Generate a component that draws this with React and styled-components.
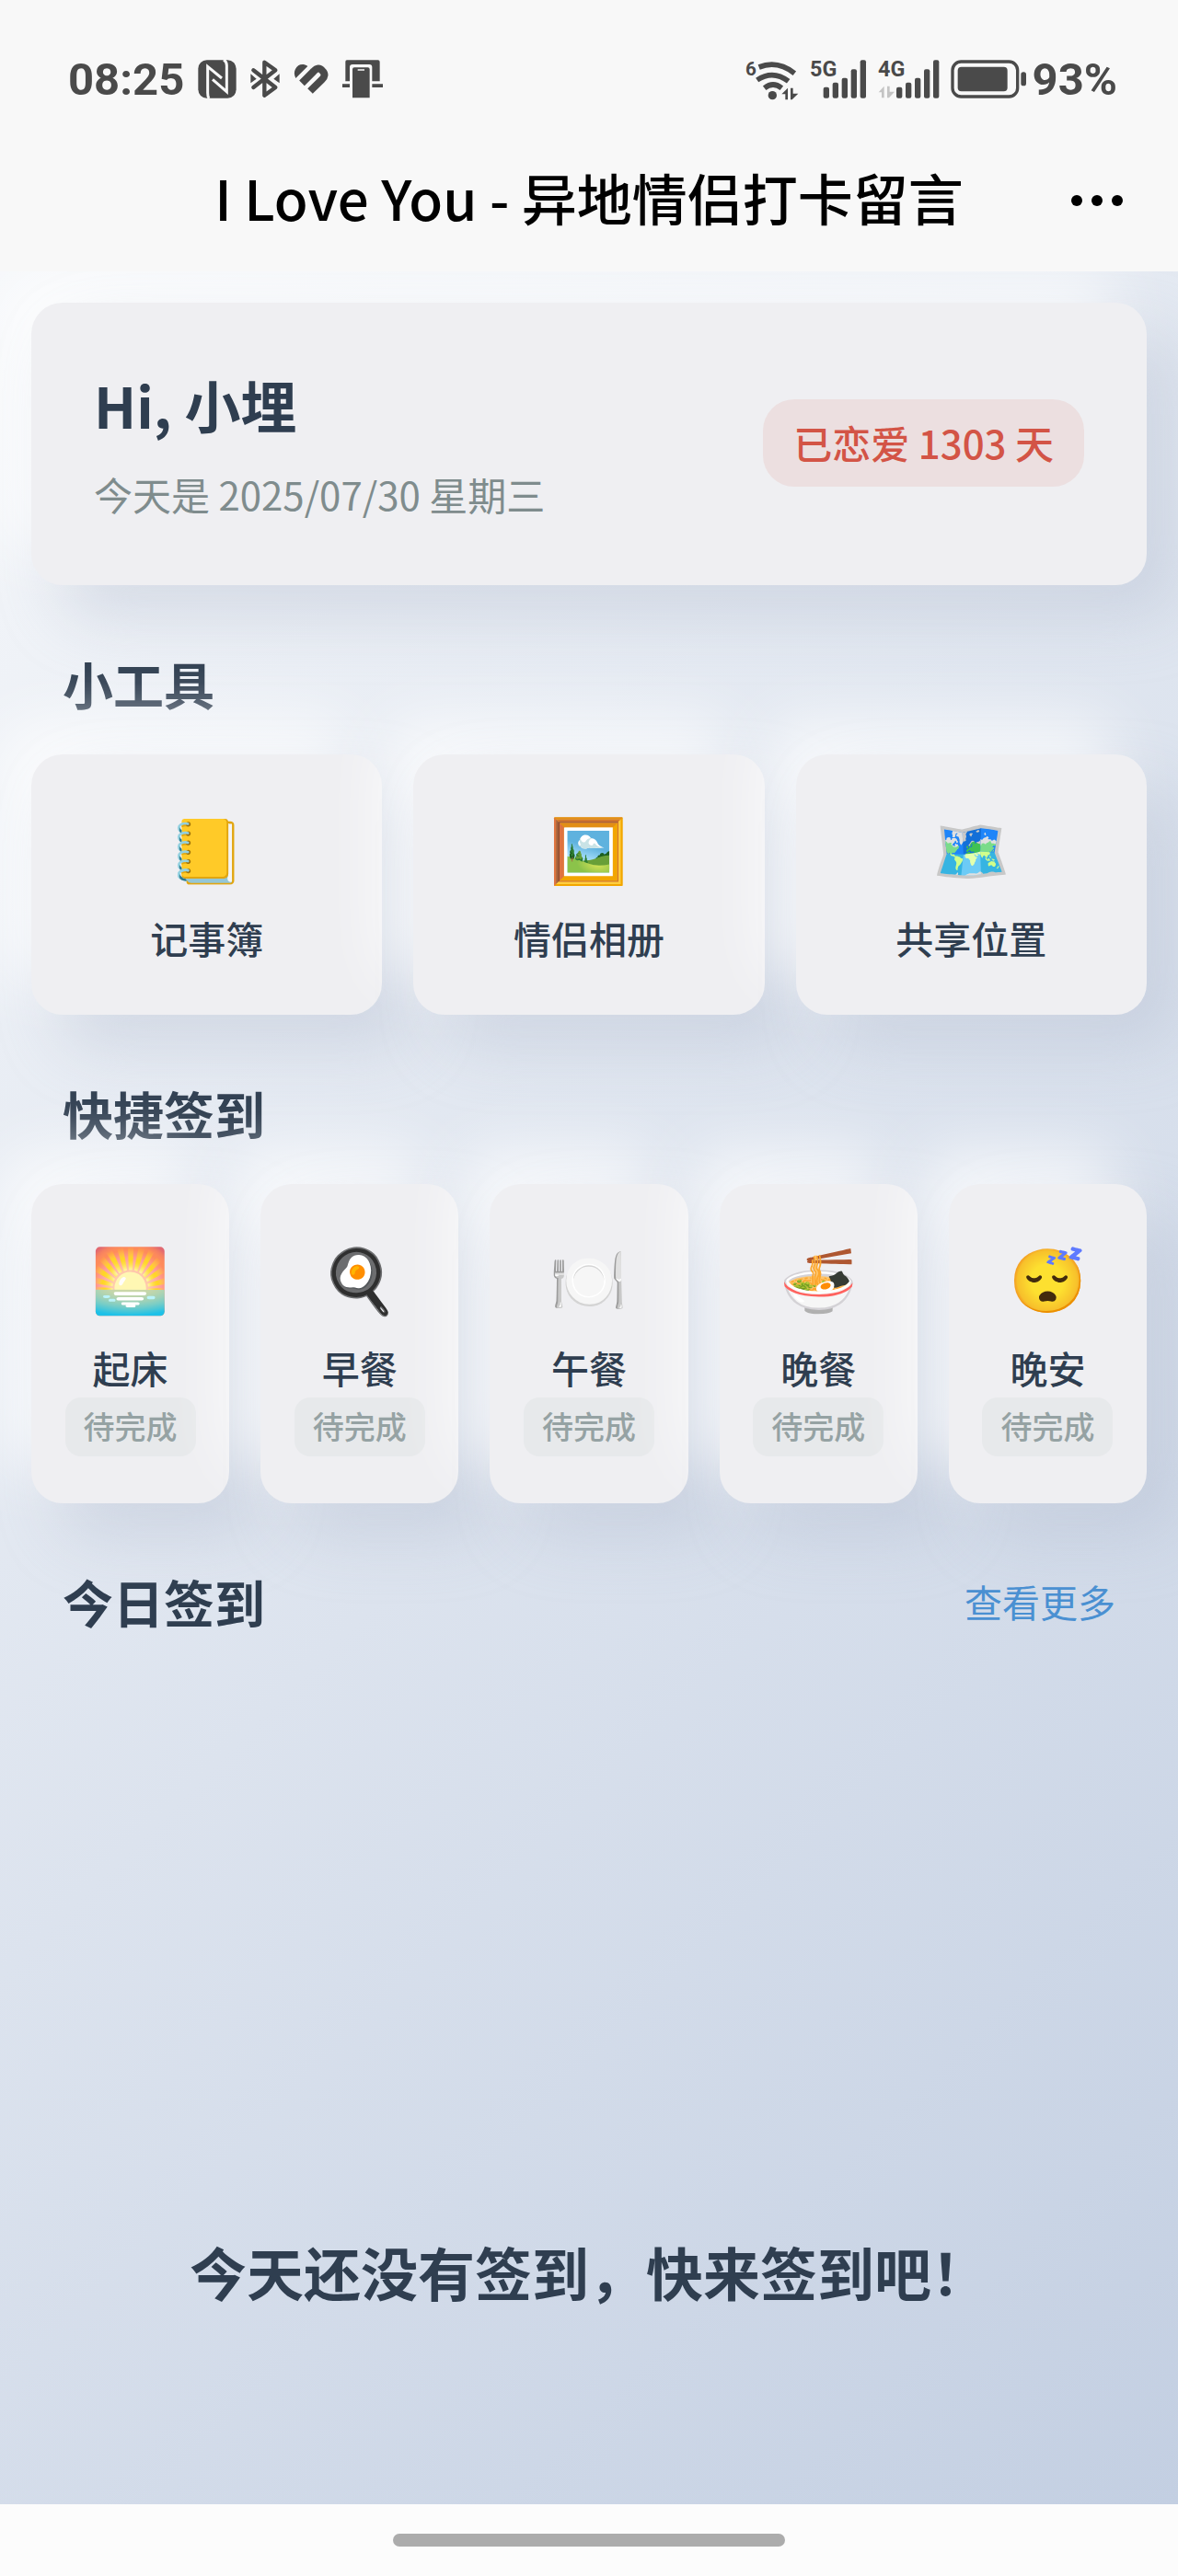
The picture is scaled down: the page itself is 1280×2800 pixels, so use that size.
import React from "react";
import styled, { createGlobalStyle } from "styled-components";

const GlobalStyle = createGlobalStyle`
  :root {
    --app-font-family: "Noto Sans CJK SC", "Noto Sans", sans-serif;
    --status-font-family: Roboto, "Noto Sans", sans-serif;
    --ink: #2f3e50;
    --muted: #7f8c8d;
    --status: #4a4a4a;
    --card: #efeff2;
  }

  * {
    box-sizing: border-box;
  }

  body {
    margin: 0px;
    font-family: var(--app-font-family);
    color: var(--ink);
  }

  button {
    border: none;
    font-family: inherit;
    color: inherit;
    cursor: pointer;
  }
`;

const Screen = styled.div`
  display: flex;
  flex-direction: column;
  min-height: 100vh;
`;

const Header = styled.header`
  padding-bottom: 31px;
  background: #f8f8f8;
`;

const StatusBar = styled.div`
  display: flex;
  align-items: center;
  justify-content: space-between;
  height: 172px;
  padding: 0px 66px 0px 74px;
  color: var(--status);
  font-family: var(--status-font-family);
  font-size: 49px;
  font-weight: 700;
`;

const StatusGroup = styled.div`
  display: flex;
  align-items: center;
  gap: ${(props) => props.$gap}px;

  svg {
    display: block;
    fill: currentColor;
    overflow: visible;
  }
`;

const NavBar = styled.div`
  display: grid;
  grid-template-columns: 1fr auto 1fr;
  align-items: center;
  height: 92px;
  padding: 0px 54px;
`;

const NavTitle = styled.h1`
  grid-column: 2;
  margin: 0px;
  padding-bottom: 8px;
  color: #000000;
  font-size: 60px;
  font-weight: 500;
  line-height: 84px;
`;

const MoreButton = styled.button`
  display: flex;
  justify-self: end;
  gap: 10px;
  padding: 20px 6px;
  background: none;
`;

const Dot = styled.span`
  width: 12px;
  height: 12px;
  border-radius: 50%;
  background: #000000;
`;

const Content = styled.main`
  display: flex;
  flex: 1;
  flex-direction: column;
  padding: 34px;
  overflow: hidden;
  background: linear-gradient(135deg, #f5f7fa 0%, #c3cfe2 100%);
`;

const cardShadow = `
  34px 34px 68px rgba(174, 185, 205, 0.4),
  -34px -34px 68px rgba(255, 255, 255, 0.8)
`;

const GreetingCard = styled.section`
  position: relative;
  display: flex;
  align-items: center;
  justify-content: space-between;
  padding: 66px 68px 68px;
  border-radius: 34px;
  background: var(--card);
  box-shadow: ${cardShadow};
`;

const Greeting = styled.div`
  display: flex;
  flex-direction: column;
  gap: 21px;
`;

const GreetingName = styled.h2`
  margin: 0px;
  font-size: 61px;
  font-weight: 700;
  line-height: 90px;
`;

const GreetingDate = styled.p`
  margin: 0px;
  color: var(--muted);
  font-size: 42px;
  line-height: 62px;
`;

const LoveBadge = styled.span`
  padding: 15px 33px 17px;
  border-radius: 34px;
  background: #ecdfe0;
  color: #d35446;
  font-size: 42px;
  font-weight: 500;
  line-height: 63px;
`;

const SectionHead = styled.div`
  display: flex;
  align-items: center;
  justify-content: space-between;
  margin: 66px 34px 38px;
`;

const SectionTitle = styled.h2`
  margin: 0px;
  font-size: 55px;
  font-weight: 700;
  line-height: 80px;
`;

const MoreLink = styled.a`
  color: #4a90d2;
  font-size: 41px;
  text-decoration: none;
`;

const CardRow = styled.div`
  display: grid;
  grid-template-columns: repeat(${(props) => props.$columns}, 1fr);
  gap: 34px;
`;

const ActionCard = styled.button`
  position: relative;
  display: flex;
  flex-direction: column;
  align-items: center;
  padding: 56px 0px 51px;
  border-radius: 34px;
  background: var(--card);
  box-shadow: ${cardShadow};
`;

const ActionIcon = styled.span`
  display: flex;
  align-items: center;
  justify-content: center;
  height: 88px;
  margin-bottom: 24px;
  font-size: 68px;
  line-height: 88px;
`;

const ActionLabel = styled.span`
  padding-bottom: 2px;
  font-size: 41px;
  font-weight: 500;
  line-height: 62px;
`;

const ActionState = styled.span`
  padding: 6px 20px 9px;
  border-radius: 17px;
  background: #e7e9eb;
  color: #95a2a3;
  font-size: 34px;
  font-weight: 500;
  line-height: 49px;
`;

const EmptyText = styled.p`
  margin: 0px;
  padding-top: 606px;
  font-size: 62px;
  font-weight: 700;
  line-height: 90px;
  text-align: center;
`;

const Footer = styled.footer`
  display: flex;
  align-items: center;
  justify-content: center;
  height: 78px;
  background: #fcfcfc;
`;

const HomeHandle = styled.span`
  width: 33.3%;
  height: 14px;
  border-radius: 7px;
  background: #acacac;
`;

const NfcIcon = () => (
  <svg width="42" height="42" viewBox="0 0 126 126">
    <rect x="1" y="1" width="124" height="124" rx="28" />
    <path
      d="M36 126Q32 120 32 108V22L78 60M84 0Q94 6 94 18V104L48 64"
      fill="none"
      stroke="#f8f8f8"
      strokeWidth="9"
    />
  </svg>
);

const BluetoothIcon = () => (
  <svg width="32" height="42" viewBox="0 0 96 126">
    <path
      d="M10 34L82 90L46 116V8L82 34L10 90"
      fill="none"
      stroke="currentColor"
      strokeWidth="13"
      strokeLinecap="round"
      strokeLinejoin="round"
    />
    <path d="M1 46L20 62L1 76ZM95 46L76 62L95 76Z" />
  </svg>
);

const HeartIcon = () => (
  <svg width="38" height="34" viewBox="0 0 114 102">
    <path d="M7 48C-8 22 18 -10 46 9Z" />
    <path
      d="M27 64L65 26Q81 8 94 24Q108 38 92 53L54 90"
      fill="none"
      stroke="currentColor"
      strokeWidth="24"
    />
  </svg>
);

const StandIcon = () => (
  <svg width="44" height="42" viewBox="0 0 132 126">
    <path d="M10 6Q10 1 15 1H116Q122 1 122 7V70H97V24Q97 15 88 15H33Q24 15 24 24V70H10Z" />
    <path d="M0 79H24V90H0ZM97 79H132V90H97Z" />
    <path
      d="M33 31Q33 25 39 25H83Q89 25 89 31V124H33ZM50 31V35H72V31Z"
      fillRule="evenodd"
    />
  </svg>
);

const WifiIcon = () => (
  <svg width="58" height="46" viewBox="0 0 174 138">
    <text x="0" y="56" fontSize="62" fontWeight="700">
      6
    </text>
    <g fill="none" stroke="currentColor" strokeWidth="17">
      <path d="M44 30Q104 6 160 50" />
      <path d="M38 72Q90 38 140 76" />
      <path d="M62 98Q90 76 118 98" />
    </g>
    <circle cx="88" cy="122" r="14" />
    <path d="M118 118L138 98V136H130V118ZM147 98H155V116H172L152 136H147Z" />
  </svg>
);

const SignalIcon = ({ label, idle }) => (
  <svg
    width={idle ? 67 : 62}
    height="42"
    viewBox={idle ? "0 0 201 126" : "0 0 186 126"}
  >
    <text x="0" y="54" fontSize="70" fontWeight="700">
      {label}
    </text>
    {idle && (
      <path
        d="M2 106L20 86V124H12V106ZM30 86H38V104H54L36 124H30Z"
        fill="#c4c4c4"
      />
    )}
    <g transform={idle ? "translate(60 0)" : "translate(44 0)"}>
      <rect x="0" y="89" width="19" height="36" rx="6" />
      <rect x="30" y="74" width="19" height="51" rx="6" />
      <rect x="60" y="59" width="19" height="66" rx="6" />
      <rect x="90" y="31" width="19" height="94" rx="6" />
      <rect x="120" y="1" width="19" height="124" rx="6" />
    </g>
  </svg>
);

const BatteryIcon = () => (
  <svg width="83" height="42" viewBox="0 0 249 126">
    <rect
      x="6"
      y="6"
      width="212"
      height="114"
      rx="28"
      fill="none"
      stroke="currentColor"
      strokeWidth="10"
    />
    <rect x="23" y="23" width="162" height="80" rx="12" />
    <rect x="229" y="40" width="17" height="45" rx="8" />
  </svg>
);

const tools = [
  { icon: "📒", label: "记事簿" },
  { icon: "🖼️", label: "情侣相册" },
  { icon: "🗺️", label: "共享位置" },
];

const checkIns = [
  { icon: "🌅", label: "起床" },
  { icon: "🍳", label: "早餐" },
  { icon: "🍽️", label: "午餐" },
  { icon: "🍜", label: "晚餐" },
  { icon: "😴", label: "晚安" },
];

const App = () => {
  return (
    <Screen>
      <GlobalStyle />
      <Header>
        <StatusBar>
          <StatusGroup $gap={15}>
            <span>08:25</span>
            <NfcIcon />
            <BluetoothIcon />
            <HeartIcon />
            <StandIcon />
          </StatusGroup>
          <StatusGroup $gap={12}>
            <WifiIcon />
            <SignalIcon label="5G" />
            <SignalIcon label="4G" idle />
            <StatusGroup $gap={6}>
              <BatteryIcon />
              <span>93%</span>
            </StatusGroup>
          </StatusGroup>
        </StatusBar>
        <NavBar>
          <NavTitle>I Love You - 异地情侣打卡留言</NavTitle>
          <MoreButton type="button" aria-label="更多">
            <Dot />
            <Dot />
            <Dot />
          </MoreButton>
        </NavBar>
      </Header>
      <Content>
        <GreetingCard>
          <Greeting>
            <GreetingName>Hi, 小埋</GreetingName>
            <GreetingDate>今天是 2025/07/30 星期三</GreetingDate>
          </Greeting>
          <LoveBadge>已恋爱 1303 天</LoveBadge>
        </GreetingCard>
        <SectionHead>
          <SectionTitle>小工具</SectionTitle>
        </SectionHead>
        <CardRow $columns={3}>
          {tools.map((tool) => (
            <ActionCard type="button" key={tool.label}>
              <ActionIcon>{tool.icon}</ActionIcon>
              <ActionLabel>{tool.label}</ActionLabel>
            </ActionCard>
          ))}
        </CardRow>
        <SectionHead>
          <SectionTitle>快捷签到</SectionTitle>
        </SectionHead>
        <CardRow $columns={5}>
          {checkIns.map((item) => (
            <ActionCard type="button" key={item.label}>
              <ActionIcon>{item.icon}</ActionIcon>
              <ActionLabel>{item.label}</ActionLabel>
              <ActionState>待完成</ActionState>
            </ActionCard>
          ))}
        </CardRow>
        <SectionHead>
          <SectionTitle>今日签到</SectionTitle>
          <MoreLink href="#records">查看更多</MoreLink>
        </SectionHead>
        <EmptyText>今天还没有签到，快来签到吧！</EmptyText>
      </Content>
      <Footer>
        <HomeHandle />
      </Footer>
    </Screen>
  );
};

export default App;
